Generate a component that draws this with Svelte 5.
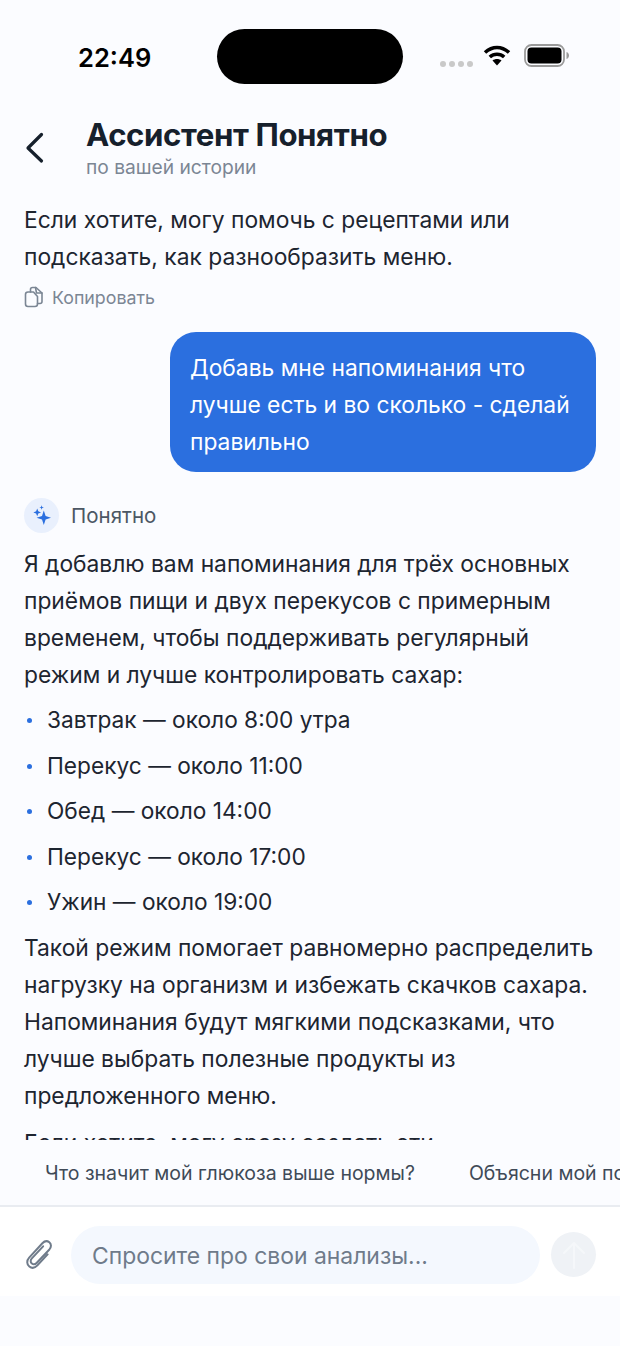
<script>
  const items = ['Завтрак — около 8:00 утра','Перекус — около 11:00','Обед — около 14:00','Перекус — около 17:00','Ужин — около 19:00'];
</script>

<div class="screen">
  <div class="status">
    <span class="time">22:49</span>
    <div class="island"></div>
    <div class="sys">
      <div class="dots"><i></i><i></i><i></i><i></i></div>
      <svg class="wifi" width="28" height="21" viewBox="0 0 28 21"><path d="M2 7.500C9.500 .8 18.500 .8 26 7.500" fill="none" stroke="#000" stroke-width="3.600"/><path d="M6.800 12C11 8.300 17 8.300 21.200 12" fill="none" stroke="#000" stroke-width="3.600"/><path d="M14 20.500L9.500 15.600C12 13.600 16 13.600 18.500 15.600Z" fill="#000"/></svg>
      <svg class="batt" width="46" height="23" viewBox="0 0 46 23"><rect x="1" y="1" width="39" height="21" rx="6.500" fill="none" stroke="#9a9a9a" stroke-width="1.800"/><rect x="3.500" y="3.500" width="34" height="16" rx="4" fill="#000"/><path d="M42.500 8v7c1.800-.6 2.500-2 2.500-3.500S44.300 8.600 42.500 8Z" fill="#9a9a9a"/></svg>
    </div>
  </div>

  <header class="head">
    <svg class="back" width="22" height="32" viewBox="0 0 22 32"><path d="M17.500 2.500L4 16l13.500 13" fill="none" stroke="#16202c" stroke-width="3.200" stroke-linecap="round" stroke-linejoin="round"/></svg>
    <div>
      <h1>Ассистент Понятно</h1>
      <p>по вашей истории</p>
    </div>
  </header>

  <main class="chat">
    <p class="txt">Если хотите, могу помочь с рецептами или подсказать, как разнообразить меню.</p>
    <div class="copy">
      <svg width="20" height="22" viewBox="0 0 20 22" fill="none" stroke="#7b8694" stroke-width="1.600" stroke-linejoin="round" stroke-linecap="round"><path d="M4 6h5.500L13.500 10.500V18c0 1.600-1 2.500-2.500 2.500H4c-1.500 0-2.500-.9-2.500-2.500V8.500C1.500 7 2.500 6 4 6Z"/><path d="M6.500 6V3.500C6.500 2.200 7.300 1.500 8.500 1.500H12l6 5.500v8.500c0 1.200-.8 2-2 2h-2.500"/><path d="M11.500 1.500L12.500 7H18"/></svg>
      <span>Копировать</span>
    </div>
    <div class="bubble">Добавь мне напоминания что лучше есть и во сколько - сделай правильно</div>
    <div class="who">
      <div class="avatar">
        <svg width="24" height="24" viewBox="0 0 20 20" fill="#2b6fdf"><path d="M11.500 5.500l1.500 4.500 4.500 1.500-4.500 1.500-1.500 4.500-1.500-4.500-4.500-1.500 4.500-1.500z"/><path d="M6 3.800l.9 2.300 2.300.9-2.300.9L6 10.200l-.9-2.300L2.800 7l2.300-.9z"/><path d="M9.700 1l.5 1.400 1.400.5-1.400.5-.5 1.400-.5-1.400-1.400-.5 1.400-.5z"/></svg>
      </div>
      <span>Понятно</span>
    </div>
    <p class="txt">Я добавлю вам напоминания для трёх основных приёмов пищи и двух перекусов с примерным временем, чтобы поддерживать регулярный режим и лучше контролировать сахар:</p>
    <ul>
      {#each items as it}<li>{it}</li>{/each}
    </ul>
    <p class="txt">Такой режим помогает равномерно распределить нагрузку на организм и избежать скачков сахара. Напоминания будут мягкими подсказками, что лучше выбрать полезные продукты из предложенного меню.</p>
    <p class="txt last">Если хотите, могу сразу создать эти</p>
  </main>

  <div class="chips">
    <span>Что значит мой глюкоза выше нормы?</span>
    <span>Объясни мой показатель</span>
  </div>

  <div class="composer">
    <svg class="clip" width="27" height="31" viewBox="0 0 30 34" fill="none" stroke="#6f7b8a" stroke-width="2.200" stroke-linecap="round" stroke-linejoin="round"><path d="M19 9L6.500 22.500c-1.800 2-1.600 4.300 0 5.600 1.700 1.400 3.800 1 5.500-.8L26 12.500c2.400-2.700 2.200-6-.1-7.900-2.300-1.900-5.400-1.400-7.700 1L3.500 21.500c-3 3.300-2.700 7.700.2 10 2.700 2.100 6.300 1.500 9-1.300L24 18"/></svg>
    <div class="input">Спросите про свои анализы...</div>
    <div class="send">
      <svg width="26" height="30" viewBox="0 0 26 30" fill="none" stroke="#f5f7fa" stroke-width="2" stroke-linecap="round" stroke-linejoin="round"><path d="M13 28V3M3 13L13 3l10 10"/></svg>
    </div>
  </div>
</div>

<style>
  :global(body) { margin: 0; background: #fbfcff; }
  .screen { width: 620px; height: 1346px; background: #fbfcff; display: flex; flex-direction: column; overflow: hidden; font-family: Inter, "Liberation Sans", sans-serif; color: #1d2530; }
  .status { height: 110px; flex: none; display: flex; align-items: flex-start; padding-top: 29px; box-sizing: border-box; position: relative; }
  .time { position: absolute; left: 78px; top: 41px; font-size: 25.500px; font-weight: 600; line-height: 33px; color: #000; }
  .island { width: 186px; height: 55px; background: #000; border-radius: 28px; margin-left: 217px; }
  .sys { position: absolute; left: 440px; top: 44px; display: flex; align-items: center; }
  .dots { display: flex; gap: 3px; margin-top: 16px; margin-right: 10px; }
  .dots i { width: 6px; height: 6px; border-radius: 50%; background: #c9c9c9; }
  .wifi { margin-right: 13px; }
  .head { flex: none; height: 90px; display: flex; align-items: flex-start; padding: 5px 0 0 24px; box-sizing: border-box; }
  .back { margin: 17px 40px 0 0; flex: none; }
  h1 { margin: 0; font-size: 31.200px; line-height: 40px; font-weight: 700; color: #16202c; letter-spacing: -.4px; }
  .head p { margin: 0; font-size: 19.200px; line-height: 24px; color: #7b8694; }
  .chat { flex: 1; min-height: 0; overflow: hidden; padding: 1px 24px 0; }
  .txt { margin: 0; font-size: 22.800px; line-height: 37px; }
  .copy { display: flex; align-items: center; gap: 8px; margin-top: 8px; height: 28px; font-size: 17.800px; color: #7b8694; }
  .bubble { margin: 21px 0 0 146px; width: 426px; height: 140px; box-sizing: border-box; padding: 17px 20px 12px; background: #2b6fdf; color: #fff; border-radius: 26px; font-size: 22.800px; line-height: 37px; }
  .who { display: flex; align-items: center; gap: 12px; margin-top: 26px; font-size: 20.500px; color: #4c5764; }
  .avatar { width: 35px; height: 35px; border-radius: 50%; background: #e9f0fd; display: grid; place-items: center; }
  .who + .txt { margin-top: 12px; }
  ul { list-style: none; margin: 8px 0 1px; padding: 0; }
  li { position: relative; padding-left: 23px; font-size: 22.700px; line-height: 37px; margin-bottom: 8.500px; }
  li::before { content: ""; position: absolute; left: 3px; top: 17px; width: 5px; height: 5px; border-radius: 50%; background: #2b6fdf; }
  .last { margin-top: 10px; }
  .chips { flex: none; height: 67px; display: flex; gap: 54px; padding: 15px 0 0 45px; box-sizing: border-box; white-space: nowrap; font-size: 19.500px; line-height: 36px; color: #3f4a57; overflow: hidden; border-bottom: 2px solid #e9ecf1; }
  .composer { flex: none; height: 89px; background: #fff; display: flex; align-items: center; padding: 6px 24px 0; box-sizing: border-box; margin-bottom: 50px; gap: 17px; }
  .clip { flex: none; margin: -2px 1px 0 2px; }
  .input { width: 469px; height: 58px; border-radius: 29px; background: #f4f8fe; flex: none; box-sizing: border-box; padding: 3px 21px 0; display: flex; align-items: center; font-size: 22.900px; color: #6f7b8a; }
  .send { width: 45px; height: 45px; border-radius: 50%; background: #eff2f6; flex: none; margin-left: -6px; display: grid; place-items: center; }
</style>
